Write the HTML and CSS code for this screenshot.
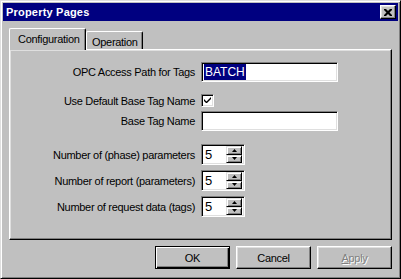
FILE: index.html
```html
<!DOCTYPE html>
<html>
<head>
<meta charset="utf-8">
<link rel="stylesheet" href="styles.css">
</head>
<body>
<div class="window">
  <div class="titlebar">
    <span class="title">Property Pages</span>
    <div class="close">
      <svg width="8" height="7" viewBox="0 0 8 7"><path d="M0 0h2l2 2 2-2h2v1l-2.5 2.5L8 6v1H6L4 5 2 7H0V6l2.5-2.5L0 1z" fill="#000"/></svg>
    </div>
  </div>
  <div class="body">
    <div class="tabs">
      <div class="tab active">Configuration</div>
      <div class="tab">Operation</div>
    </div>
    <div class="panel">
      <div class="row r1">
        <span class="lbl">OPC Access Path for Tags</span>
        <div class="field wide"><span class="sel">BATCH</span></div>
      </div>
      <div class="row r2">
        <span class="lbl">Use Default Base Tag Name</span>
        <div class="check"><svg width="9" height="9" viewBox="0 0 9 9"><path d="M1 3v2l2 2h1l4-4V1L3.5 5.5z" fill="#000"/></svg></div>
      </div>
      <div class="row r3">
        <span class="lbl">Base Tag Name</span>
        <div class="field wide"></div>
      </div>
      <div class="row r4">
        <span class="lbl">Number of (phase) parameters</span>
        <div class="field spin"><span class="val">5</span><div class="arrows"><div class="ab"><svg width="5" height="3" viewBox="0 0 5 3"><path d="M2.5 0L5 3H0z" fill="#000"/></svg></div><div class="ab"><svg width="5" height="3" viewBox="0 0 5 3"><path d="M0 0h5L2.5 3z" fill="#000"/></svg></div></div></div>
      </div>
      <div class="row r5">
        <span class="lbl">Number of report (parameters)</span>
        <div class="field spin"><span class="val">5</span><div class="arrows"><div class="ab"><svg width="5" height="3" viewBox="0 0 5 3"><path d="M2.5 0L5 3H0z" fill="#000"/></svg></div><div class="ab"><svg width="5" height="3" viewBox="0 0 5 3"><path d="M0 0h5L2.5 3z" fill="#000"/></svg></div></div></div>
      </div>
      <div class="row r5">
        <span class="lbl">Number of request data (tags)</span>
        <div class="field spin"><span class="val">5</span><div class="arrows"><div class="ab"><svg width="5" height="3" viewBox="0 0 5 3"><path d="M2.5 0L5 3H0z" fill="#000"/></svg></div><div class="ab"><svg width="5" height="3" viewBox="0 0 5 3"><path d="M0 0h5L2.5 3z" fill="#000"/></svg></div></div></div>
      </div>
    </div>
    <div class="buttons">
      <div class="btn default"><span>OK</span></div>
      <div class="btn"><span>Cancel</span></div>
      <div class="btn disabled"><span><u>A</u>pply</span></div>
    </div>
  </div>
</div>
</body>
</html>
```
FILE: styles.css
```css
* { box-sizing: border-box; }
html, body { margin: 0; padding: 0; background: #c0c0c0; }
body { font-family: "Liberation Sans", Arial, sans-serif; font-size: 11px; color: #000; letter-spacing: -0.3px; }

.window {
  width: 401px; height: 279px;
  background: #c0c0c0;
  border: 1px solid;
  border-color: #dfdfdf #000 #000 #dfdfdf;
  box-shadow: inset 1px 1px #fff, inset -1px -1px #808080;
  padding: 2px;
  display: flex; flex-direction: column;
}
.titlebar {
  height: 18px; background: #000080;
  display: flex; align-items: center; justify-content: space-between;
  padding: 0 2px 0 3px;
}
.title { color: #fff; font-weight: bold; font-size: 11px; letter-spacing: 0.2px; }
.close {
  width: 16px; height: 14px; background: #c0c0c0;
  border: 1px solid; border-color: #fff #000 #000 #fff;
  box-shadow: inset -1px -1px #808080, inset 1px 1px #dfdfdf;
  display: flex; align-items: center; justify-content: center;
}
.body { padding: 7px 6px 0 6px; display: flex; flex-direction: column; }

.tabs { display: flex; align-items: flex-end; height: 21px; }
.tab {
  height: 18px; padding: 0 5px;
  background: #c0c0c0;
  border: 1px solid; border-bottom: none;
  border-color: #fff #000 #000 #fff;
  border-radius: 2px 2px 0 0;
  box-shadow: inset -1px 0 #808080;
  display: flex; align-items: center;
}
.tab.active {
  width: 77px; height: 22px; margin-bottom: -1px;
  position: relative; z-index: 1;
  padding: 0 0 2px 8px;
}
.tab:not(.active) { width: 57px; padding-left: 5px; padding-top: 2px; }

.panel {
  height: 191px;
  border: 1px solid; border-color: #fff #000 #000 #fff;
  box-shadow: inset -1px -1px #808080, inset 1px 1px #dfdfdf;
  padding-top: 12px;
  display: flex; flex-direction: column;
}
.row { display: flex; align-items: center; }
.lbl { width: 185px; text-align: right; margin-right: 6px; white-space: nowrap; }
.r2 { margin-top: 12px; }
.r3 { margin-top: 4px; }
.r4 { margin-top: 13px; }
.r5 { margin-top: 5px; }

.field {
  background: #fff;
  border: 1px solid; border-color: #808080 #fff #fff #808080;
  box-shadow: inset 1px 1px #000, inset -1px -1px #dfdfdf;
  display: flex; align-items: center;
}
.wide { width: 137px; height: 20px; padding-left: 2px; }
.sel { background: #000080; color: #fff; height: 16px; line-height: 16px; padding: 0 1px; font-size: 12px; letter-spacing: 0; }
.check {
  width: 13px; height: 13px; background: #fff;
  border: 1px solid; border-color: #808080 #fff #fff #808080;
  box-shadow: inset 1px 1px #000, inset -1px -1px #dfdfdf;
  display: flex; align-items: center; justify-content: center;
}
.spin { width: 44px; height: 21px; padding: 2px; justify-content: space-between; }
.val { padding-left: 1px; font-size: 13px; letter-spacing: 0; }
.arrows { width: 16px; height: 17px; display: flex; flex-direction: column; }
.ab {
  flex: 1; background: #c0c0c0;
  border: 1px solid; border-color: #dfdfdf #000 #000 #dfdfdf;
  box-shadow: inset 1px 1px #fff, inset -1px -1px #808080;
  display: flex; align-items: center; justify-content: center;
}

.buttons { display: flex; justify-content: flex-end; gap: 6px; margin-top: 6px; }
.btn {
  width: 75px; height: 23px;
  border: 1px solid; border-color: #fff #000 #000 #fff;
  box-shadow: inset -1px -1px #808080, inset 1px 1px #dfdfdf;
  display: flex; align-items: center; justify-content: center;
}
.btn.default {
  border: 1px solid #000;
  box-shadow: inset 1px 1px #fff, inset -1px -1px #000, inset -2px -2px #808080;
}
.btn.disabled { color: #808080; text-shadow: 1px 1px #fff; }
```
